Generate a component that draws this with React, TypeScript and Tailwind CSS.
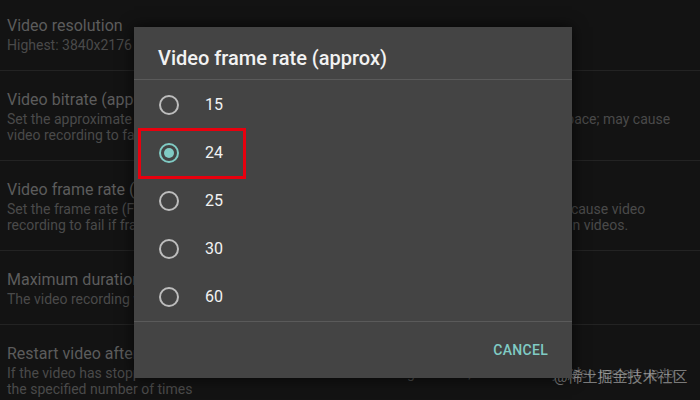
import React from "react";

type Pref = {
  title: string;
  lines: string[];
  first?: boolean;
};

const prefs: Pref[] = [
  { title: "Video resolution", lines: ["Highest: 3840x2176 (16:9, 8.35MP)"], first: true },
  {
    title: "Video bitrate (approx)",
    lines: [
      "Set the approximate bitrate for videos (higher means better quality, but takes much more space; may cause",
      "video recording to fail if the bitrate is not supported)",
    ],
  },
  {
    title: "Video frame rate (approx)",
    lines: [
      "Set the frame rate (FPS) for videos. Note that some frame rates aren't guaranteed and may cause video",
      "recording to fail if frame rate is not supported; higher frame rates will also use more space in videos.",
    ],
  },
  { title: "Maximum duration of video", lines: ["The video recording will stop after this duration"] },
  {
    title: "Restart video after max duration",
    lines: [
      "If the video has stopped due to max duration or max filesize being reached, automatically video restart up to",
      "the specified number of times",
    ],
  },
];

const rates = ["15", "24", "25", "30", "60"];

function Radio({ checked }: { checked: boolean }) {
  return (
    <span
      className={`flex h-5 w-5 items-center justify-center rounded-full border-2 ${
        checked ? "border-[#80cbc4]" : "border-[#bdbdbd]"
      }`}
    >
      {checked && <span className="h-[10px] w-[10px] rounded-full bg-[#80cbc4]" />}
    </span>
  );
}

export default function App() {
  return (
    <div
      className="relative h-[400px] w-[700px] overflow-hidden bg-[#131313]"
      style={{ fontFamily: "Roboto, 'Noto Sans CJK SC', sans-serif" }}
    >
      {/* settings list behind the dialog */}
      <div className="flex flex-col">
        {prefs.map((p) => (
          <div
            key={p.title}
            className={`border-b border-[#232323] px-[7px] pb-[17px] ${p.first ? "pt-[16px]" : "pt-[19px]"}`}
          >
            <div className="text-[16px] leading-[20px] text-[#5c5c5c]">{p.title}</div>
            <div className="mt-px text-[14px] leading-[16px] text-[#4a4a4a]">
              {p.lines.map((l) => (
                <div key={l} className="whitespace-nowrap">
                  {l}
                </div>
              ))}
            </div>
          </div>
        ))}
      </div>

      {/* watermark */}
      <div className="absolute left-[554px] top-[367px] whitespace-nowrap text-[15px] leading-[20px] text-white/45">
        @稀土掘金技术社区
      </div>

      {/* dialog */}
      <div className="absolute left-[134px] top-[27px] flex h-[351px] w-[438px] flex-col bg-[#444444] shadow-[0_0_14px_rgba(0,0,0,0.7)]">
        <div className="border-b border-[#5a5a5a] px-[24px] pb-[9px] pt-[19px] text-[20px] font-medium leading-[24px] text-[#f2f2f2]">
          Video frame rate (approx)
        </div>
        <div className="flex flex-col border-b border-[#5a5a5a] pt-px">
          {rates.map((r) => (
            <div key={r} className="flex h-[48px] items-center pl-[25px]">
              <Radio checked={r === "24"} />
              <span className="ml-[26px] text-[16px] text-[#f2f2f2]">{r}</span>
            </div>
          ))}
        </div>
        <div className="flex flex-1 items-center justify-end pr-[24px]">
          <span className="text-[14px] font-medium tracking-[0.3px] text-[#80cbc4]">CANCEL</span>
        </div>

        {/* highlight annotation */}
        <div className="absolute left-[4px] top-[101px] h-[51px] w-[108px] border-[3px] border-[#e8000e]" />
      </div>
    </div>
  );
}
